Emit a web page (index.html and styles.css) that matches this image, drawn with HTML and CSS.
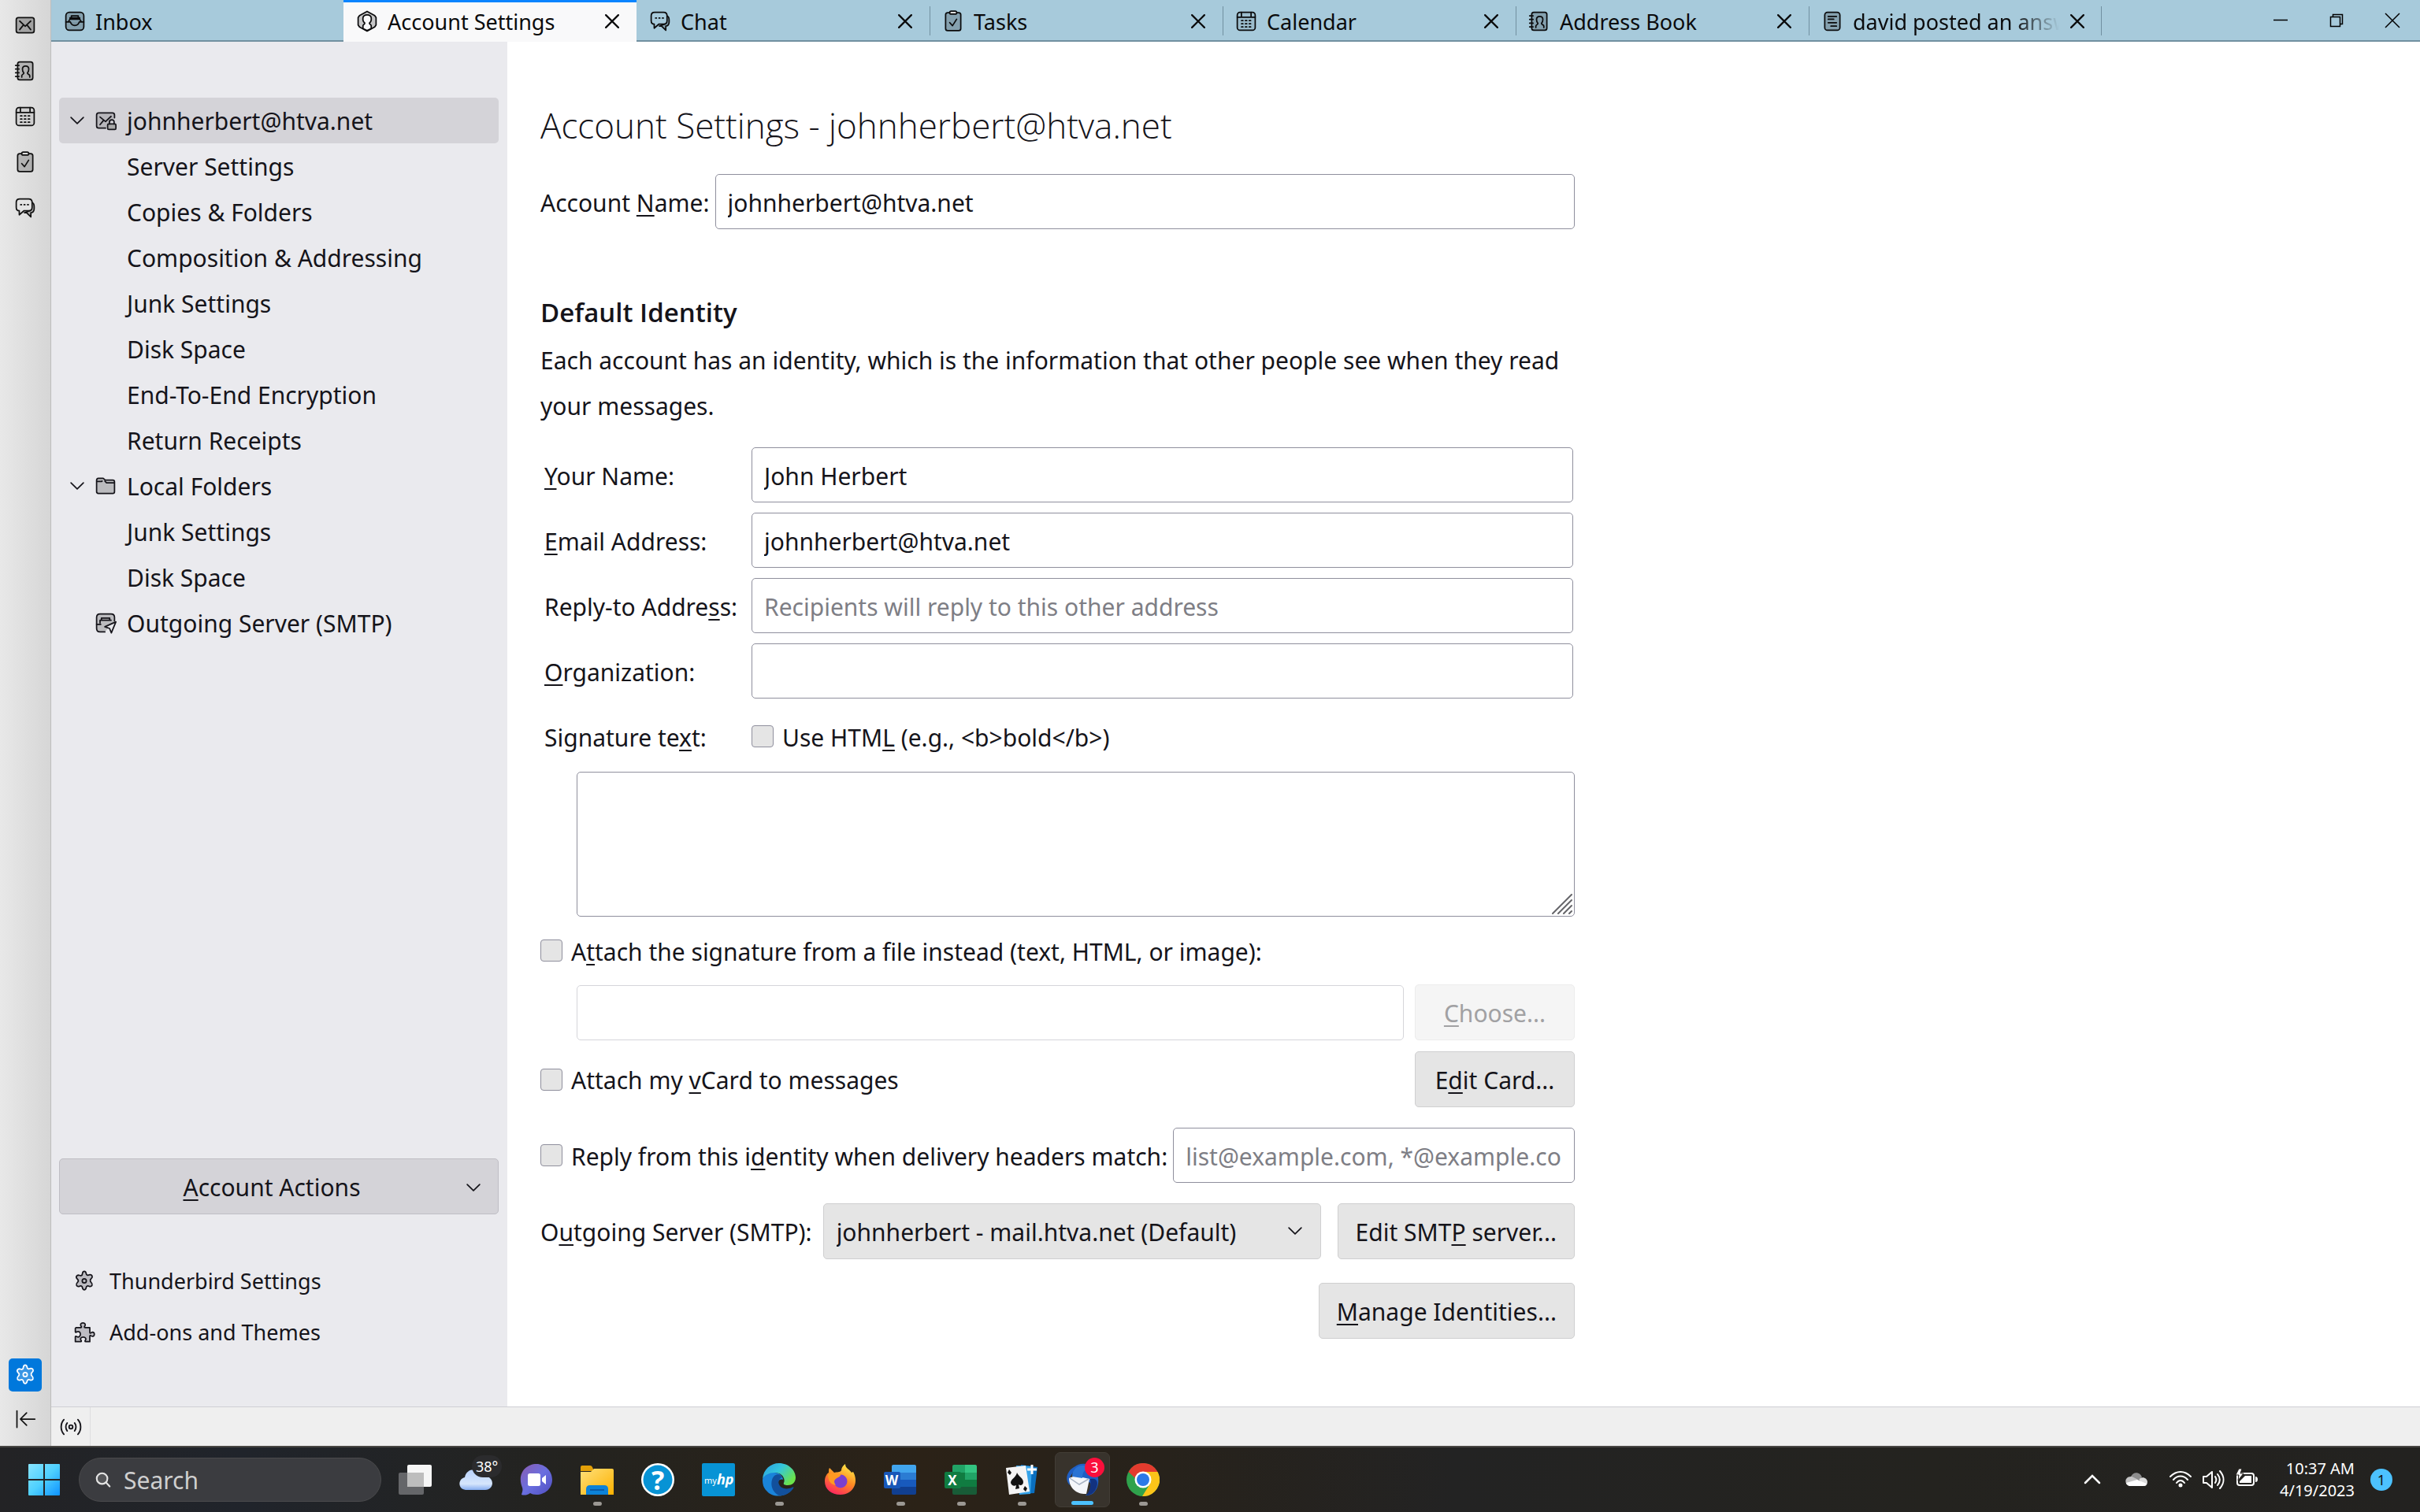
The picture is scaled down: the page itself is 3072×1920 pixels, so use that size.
FILE: index.html
```html
<!DOCTYPE html>
<html lang="en">
<head>
    <meta charset="UTF-8">
    <meta name="viewport" content="width=device-width, initial-scale=1.0">
    <title>Account Settings</title>
    <link rel="stylesheet" href="styles.css">
</head>
<body>
    <!-- Icon definitions -->
    <svg class="defs" width="0" height="0" aria-hidden="true">
        <symbol id="i-mail" viewBox="0 0 16 16">
            <rect x="1.5" y="2.5" width="13" height="11" rx="1.5" fill="#0004"/>
            <path d="M4 5l4 3.8L12 5M4 11.2l2.4-3M12 11.2l-2.4-3"/>
        </symbol>
        <symbol id="i-book" viewBox="0 0 16 16">
            <rect x="2.5" y="1.5" width="11" height="13" rx="1.5" fill="#0003"/>
            <path d="M1 4h2.5M1 6.7h2.5M1 9.4h2.5M1 12h2.5M5.5 12.5v-1c0-1 1.5-1 1.5-2C6 8.5 6 7.5 6 6.7 6 5.2 7 4.5 8.3 4.5s2.3.7 2.3 2.2c0 .8 0 1.800-1 2.800 0 1 1.700 1 1.700 2v1"/>
        </symbol>
        <symbol id="i-cal" viewBox="0 0 16 16">
            <rect x="1.5" y="1.5" width="13" height="13" rx="2" fill="#0001"/>
            <path d="M1.5 5h13M4.5 1.500v3M11.5 1.500v3"/>
            <path stroke-dasharray="1 1.800" d="M4.600 7.500h7M4.600 9.800h7M4.600 12.100h7"/>
        </symbol>
        <symbol id="i-task" viewBox="0 0 16 16">
            <rect x="2.5" y="1.800" width="11" height="13" rx="1.5" fill="#0003"/>
            <rect x="5.5" y=".6" width="5" height="2.200" rx="1" fill="#ddd"/>
            <path d="M5.5 9l2 2.200 3-4.700"/>
        </symbol>
        <symbol id="i-chat" viewBox="0 0 16 16">
            <path fill="#0003" d="M12.7 4c1.3.4 1.8 1.5 1.8 3v1.5c0 1.8-.9 2.8-2.4 3v3L9 11.500H7.500l4-1.500z"/>
            <path class="bubble" d="M4 1.5h6.5c1.5 0 2.5 1 2.5 2.5v3.500c0 1.500-1 2.500-2.500 2.500H7.200l-3.500 3v-3c-1.300 0-2.200-1-2.200-2.500V4c0-1.500 1-2.500 2.500-2.500z"/>
            <path stroke-dasharray=".6 1.900" d="M4.700 5.700h5.600"/>
        </symbol>
        <symbol id="i-gear" viewBox="0 0 16 16">
            <path d="M6.7 2.2C6.9 1.2 7.3.8 8 .8s1.1.4 1.3 1.4l.3 1 .9.5 1-.3c1-.3 1.7-.1 2.1.6s.2 1.3-.5 2l-.7.8v1.3l.7.9c.7.7.8 1.4.5 2-.4.7-1.1.9-2.1.6l-1-.3-.9.5-.3 1c-.2 1-.6 1.4-1.3 1.4s-1.1-.4-1.3-1.4l-.3-1-.9-.5-1 .3c-1 .3-1.7.1-2.1-.6-.3-.6-.2-1.3.5-2l.7-.9V7.200l-.7-.9c-.7-.7-.9-1.400-.5-2s1.100-.9 2.100-.6l1 .3.900-.5z"/>
            <circle cx="8" cy="7.700" r="1.500"/>
        </symbol>
        <symbol id="i-inbox" viewBox="0 0 16 16">
            <rect x="1.5" y="1.5" width="13" height="13" rx="2.5" fill="#0003"/>
            <path d="M3.5 8l1-1.500h7l1 1.500M4.500 6.500v-1h7v1M5.500 5.500V4h5v1.500"/>
            <path fill="#0001" d="M1.500 8.500h3.300c.4 1.700 1.500 2.500 3.200 2.500s2.800-.8 3.200-2.500h3.300"/>
        </symbol>
        <symbol id="i-account" viewBox="0 0 16 16">
            <path fill="#0003" d="M8 .8l5.500 3 1 1.500v5.400l-1 1.500-5.500 3-5.500-3-1-1.500V5.300l1-1.500z"/>
            <path fill="#f9f9fa" d="M5 13.300v-2c0-1 1.500-1 1.300-2C5 8.300 4.800 7 5 5.500 5.200 4 6.300 3.300 8 3.300s2.800.7 3 2.200c.2 1.500 0 2.800-1.300 3.800-.2 1 1.300 1 1.300 2v2l-3 1.500z"/>
        </symbol>
        <symbol id="i-page" viewBox="0 0 16 16">
            <rect x="2.5" y="1.5" width="11" height="13" rx="2" fill="#0003"/>
            <path d="M5 4.500h6M5 6.500h4M5 9h6M7 11.500h4"/>
        </symbol>
        <symbol id="i-mail-lock" viewBox="0 0 16 16">
            <path fill="#0002" d="M8 13.500H3c-1 0-1.500-.5-1.500-1.500V4c0-1 .5-1.500 1.500-1.500h10c1 0 1.500.5 1.500 1.500v2"/>
            <path d="M4 5.500l4 3.300L12 5M4 11l2.300-2.800"/>
            <rect x="9.500" y="10.500" width="6" height="4" rx=".8" fill="#aaa"/>
            <path d="M10.800 10.500V9c0-2 3.400-2 3.400 0v1.500"/>
        </symbol>
        <symbol id="i-folder" viewBox="0 0 16 16">
            <path fill="#0003" d="M1.500 4c0-1 .5-1.500 1.300-1.500h3.500l1.500 1.300h5.400c.9 0 1.300.5 1.300 1.300v7c0 .9-.5 1.400-1.300 1.400H2.800c-.9 0-1.300-.5-1.300-1.300z"/>
            <path d="M2 4.800h3l.5-.3M7.500 4.500l1.200 1.300h5.500"/>
        </symbol>
        <symbol id="i-out" viewBox="0 0 16 16">
            <path fill="#0003" d="M7.500 14.500H4c-1.500 0-2.500-1-2.500-2.500V4c0-1.500 1-2.500 2.500-2.500h8c1.500 0 2.500 1 2.500 2.500v2.500"/>
            <path d="M1.500 9h3M4 8V6h8M5 6V4.500h6V6"/>
            <path fill="#eaeaee" d="M7.500 10.800l8-3.600-3.300 8-1.300-3.200z"/>
        </symbol>
        <symbol id="i-puzzle" viewBox="0 0 16 16">
            <path d="M2 4.500h3.500c.6 0 .6-.6.200-1C4.800 2.300 5.500 1 7 1s2.200 1.300 1.300 2.500c-.4.400-.4 1 .2 1H12V8c0 .6.500.6 1 .2 1.200-.9 2.300-.2 2.300 1.100s-1.100 2-2.300 1.200c-.5-.4-1-.4-1 .2v4H9c-.6 0-.6-.6-.2-1 .9-1.200 0-2.300-1.600-2.300s-2.500 1.100-1.600 2.300c.4.400.4 1-.2 1H1.500v-3.500c0-.6.500-.6 1-.2 1.500.8 2.700-.2 2.700-1.700S4 6.800 2.500 7.600c-.5.400-1 .4-1-.2V5z"/>
        </symbol>
        <symbol id="i-down" viewBox="0 0 16 16">
            <path d="M1 4.500l7 7 7-7"/>
        </symbol>
        <symbol id="i-close" viewBox="0 0 16 16">
            <path d="M1 1l14 14M15 1L1 15"/>
        </symbol>
    </svg>

    <div class="app">
        <!-- Spaces toolbar -->
        <nav class="spaces" aria-label="Spaces">
            <button class="space" aria-label="Mail"><svg class="icon"><use href="#i-mail"/></svg></button>
            <button class="space" aria-label="Address Book"><svg class="icon"><use href="#i-book"/></svg></button>
            <button class="space" aria-label="Calendar"><svg class="icon"><use href="#i-cal"/></svg></button>
            <button class="space" aria-label="Tasks"><svg class="icon"><use href="#i-task"/></svg></button>
            <button class="space" aria-label="Chat"><svg class="icon"><use href="#i-chat"/></svg></button>
            <button class="space space-settings" aria-label="Settings"><svg class="icon icon-light"><use href="#i-gear"/></svg></button>
            <button class="space space-collapse" aria-label="Collapse">
                <svg class="icon" viewBox="0 0 16 16"><path d="M2 2v12M15 8H5M9 3.500L4.500 8 9 12.500"/></svg>
            </button>
        </nav>

        <div class="window">
            <header class="tabbar">
                <div class="tab tab-first">
                    <button class="tab-button"><svg class="icon"><use href="#i-inbox"/></svg><span class="tab-text">Inbox</span></button>
                </div>
                <div class="tab tab-active">
                    <button class="tab-button"><svg class="icon"><use href="#i-account"/></svg><span class="tab-text">Account Settings</span></button>
                    <button class="tab-close" aria-label="Close tab"><svg class="icon-x"><use href="#i-close"/></svg></button>
                </div>
                <div class="tab">
                    <button class="tab-button"><svg class="icon"><use href="#i-chat"/></svg><span class="tab-text">Chat</span></button>
                    <button class="tab-close" aria-label="Close tab"><svg class="icon-x"><use href="#i-close"/></svg></button>
                </div>
                <div class="tab tab-line">
                    <button class="tab-button"><svg class="icon"><use href="#i-task"/></svg><span class="tab-text">Tasks</span></button>
                    <button class="tab-close" aria-label="Close tab"><svg class="icon-x"><use href="#i-close"/></svg></button>
                </div>
                <div class="tab tab-line">
                    <button class="tab-button"><svg class="icon"><use href="#i-cal"/></svg><span class="tab-text">Calendar</span></button>
                    <button class="tab-close" aria-label="Close tab"><svg class="icon-x"><use href="#i-close"/></svg></button>
                </div>
                <div class="tab tab-line">
                    <button class="tab-button"><svg class="icon"><use href="#i-book"/></svg><span class="tab-text">Address Book</span></button>
                    <button class="tab-close" aria-label="Close tab"><svg class="icon-x"><use href="#i-close"/></svg></button>
                </div>
                <div class="tab tab-line tab-last">
                    <button class="tab-button"><svg class="icon"><use href="#i-page"/></svg><span class="tab-text tab-fade">david posted an answer</span></button>
                    <button class="tab-close" aria-label="Close tab"><svg class="icon-x"><use href="#i-close"/></svg></button>
                </div>
                <div class="window-buttons">
                    <button aria-label="Minimize"><svg class="icon-win" viewBox="0 0 20 20"><path d="M1 9.500h18"/></svg></button>
                    <button aria-label="Restore"><svg class="icon-win" viewBox="0 0 20 20"><path d="M2.500 5.500h12v12h-12zM5.500 5.500v-3h12v12h-3"/></svg></button>
                    <button aria-label="Close"><svg class="icon-win" viewBox="0 0 20 20"><path d="M1 1l18 18M19 1L1 19"/></svg></button>
                </div>
            </header>

            <div class="content">
                <aside class="sidebar">
                    <ul class="tree">
                        <li><a class="node selected" href="#"><svg class="twisty"><use href="#i-down"/></svg><svg class="icon"><use href="#i-mail-lock"/></svg>johnherbert@htva.net</a>
                            <ul>
                                <li><a class="leaf" href="#">Server Settings</a></li>
                                <li><a class="leaf" href="#">Copies &amp; Folders</a></li>
                                <li><a class="leaf" href="#">Composition &amp; Addressing</a></li>
                                <li><a class="leaf" href="#">Junk Settings</a></li>
                                <li><a class="leaf" href="#">Disk Space</a></li>
                                <li><a class="leaf" href="#">End-To-End Encryption</a></li>
                                <li><a class="leaf" href="#">Return Receipts</a></li>
                            </ul>
                        </li>
                        <li><a class="node" href="#"><svg class="twisty"><use href="#i-down"/></svg><svg class="icon"><use href="#i-folder"/></svg>Local Folders</a>
                            <ul>
                                <li><a class="leaf" href="#">Junk Settings</a></li>
                                <li><a class="leaf" href="#">Disk Space</a></li>
                            </ul>
                        </li>
                        <li><a class="node" href="#"><span class="twisty"></span><svg class="icon"><use href="#i-out"/></svg>Outgoing Server (SMTP)</a></li>
                    </ul>

                    <button class="actions"><span class="actions-text"><u>A</u>ccount Actions</span><svg class="chevron"><use href="#i-down"/></svg></button>

                    <div class="side-links">
                        <a href="#"><svg class="icon icon-filled"><use href="#i-gear"/></svg>Thunderbird Settings</a>
                        <a href="#"><svg class="icon icon-filled"><use href="#i-puzzle"/></svg>Add-ons and Themes</a>
                    </div>
                </aside>

                <main class="page">
                    <form class="form">
                        <h1>Account Settings - johnherbert@htva.net</h1>
                        <div class="row name-row">
                            <label for="account-name">Account <u>N</u>ame:</label>
                            <input class="field" type="text" id="account-name" value="johnherbert@htva.net">
                        </div>

                        <h2>Default Identity</h2>
                        <p class="description">Each account has an identity, which is the information that other people see when they read your messages.</p>

                        <div class="identity">
                            <label for="your-name"><u>Y</u>our Name:</label>
                            <input class="field" type="text" id="your-name" value="John Herbert">
                            <label for="email"><u>E</u>mail Address:</label>
                            <input class="field" type="text" id="email" value="johnherbert@htva.net">
                            <label for="reply-to">Reply-to Addre<u>s</u>s:</label>
                            <input class="field" type="text" id="reply-to" placeholder="Recipients will reply to this other address">
                            <label for="organization"><u>O</u>rganization:</label>
                            <input class="field" type="text" id="organization">
                            <label for="signature">Signature te<u>x</u>t:</label>
                            <div class="check">
                                <input type="checkbox" id="use-html">
                                <label for="use-html">Use HTM<u>L</u> (e.g., &lt;b&gt;bold&lt;/b&gt;)</label>
                            </div>
                        </div>

                        <div class="signature">
                            <textarea class="field" id="signature"></textarea>
                            <svg class="grip" viewBox="0 0 26 26"><path d="M1 25L25 1M8 25L25 8M15 25l10-10M22 25l3-3"/></svg>
                        </div>

                        <div class="check attach-file">
                            <input type="checkbox" id="attach-file">
                            <label for="attach-file">A<u>t</u>tach the signature from a file instead (text, HTML, or image):</label>
                        </div>
                        <div class="row file-row">
                            <input class="field" type="text" aria-label="Signature file" disabled>
                            <button class="button button-small" type="button" disabled><u>C</u>hoose...</button>
                        </div>

                        <div class="row vcard-row">
                            <div class="check">
                                <input type="checkbox" id="vcard">
                                <label for="vcard">Attach my <u>v</u>Card to messages</label>
                            </div>
                            <button class="button button-small" type="button">E<u>d</u>it Card...</button>
                        </div>

                        <div class="row match-row">
                            <div class="check">
                                <input type="checkbox" id="match">
                                <label for="match">Reply from this i<u>d</u>entity when delivery headers match:</label>
                            </div>
                            <input class="field" type="text" aria-label="Delivery headers" placeholder="list@example.com, *@example.com">
                        </div>

                        <div class="row smtp-row">
                            <label for="smtp">O<u>u</u>tgoing Server (SMTP):</label>
                            <div class="select">
                                <select class="button" id="smtp">
                                    <option>johnherbert - mail.htva.net (Default)</option>
                                </select>
                                <svg class="chevron"><use href="#i-down"/></svg>
                            </div>
                            <button class="button" type="button">Edit SMT<u>P</u> server...</button>
                        </div>

                        <div class="row manage-row">
                            <button class="button" type="button"><u>M</u>anage Identities...</button>
                        </div>
                    </form>
                </main>
            </div>

            <footer class="statusbar">
                <button class="online" aria-label="Online">
                    <svg class="icon-online" viewBox="0 0 30 24"><circle cx="15" cy="12" r="2.500"/><path d="M10 6.500c-2.500 3-2.500 8 0 11M20 6.500c2.500 3 2.500 8 0 11M5.500 2c-5 5.500-5 14.500 0 20M24.500 2c5 5.500 5 14.500 0 20"/></svg>
                </button>
            </footer>
        </div>
    </div>

    <!-- Windows taskbar -->
    <div class="taskbar">
        <button class="start" aria-label="Start">
            <svg width="42" height="42" viewBox="0 0 42 42">
                <defs><linearGradient id="g-win" gradientUnits="userSpaceOnUse" x1="0" y1="0" x2="42" y2="42"><stop offset="0" stop-color="#8be6ff"/><stop offset=".5" stop-color="#4fd0ff"/><stop offset="1" stop-color="#0a8fff"/></linearGradient></defs>
                <path fill="url(#g-win)" d="M2 1h18v19H1V2q0-1 1-1zM22 1h18q1 0 1 1v18H22zM1 22h19v19H2q-1 0-1-1zM22 22h19v18q0 1-1 1H22z"/>
            </svg>
        </button>
        <label class="search">
            <svg width="28" height="28" viewBox="0 0 28 28" fill="#ffffff22" stroke="#e4e4e4" stroke-width="3" stroke-linecap="round"><circle cx="12" cy="12" r="9.500"/><path d="M19 19l6.500 7"/></svg>
            <input type="text" placeholder="Search" aria-label="Search">
        </label>

        <div class="apps">
            <button class="app-button" aria-label="Task view">
                <svg viewBox="0 0 42 42"><rect x="11" y="2" width="31" height="28" rx="2" fill="#f6f6f6"/><rect x="0" y="12" width="32" height="28" rx="2" fill="#77777acc"/><path d="M11 12h21v18H11z" fill="#bdbdbd"/></svg>
            </button>
            <button class="app-button" aria-label="Weather">
                <svg viewBox="0 0 42 42"><defs><linearGradient id="g-cloud" x1="0" y1="0" x2="0" y2="1"><stop offset="0" stop-color="#b9d2fb"/><stop offset=".7" stop-color="#d6e6fc"/><stop offset="1" stop-color="#86adf0"/></linearGradient></defs><path fill="url(#g-cloud)" d="M8 34C-2 33-2 20 7 18 9 6 25 5 29 16c16-1 17 17 4 18z"/></svg>
                <span class="temp">38°</span>
            </button>
            <button class="app-button" aria-label="Chat">
                <svg viewBox="0 0 42 42"><defs><linearGradient id="g-chat" x1="0" y1="0" x2="1" y2="1"><stop offset="0" stop-color="#8a5bb0"/><stop offset=".5" stop-color="#6a6fe0"/><stop offset="1" stop-color="#4f4dbf"/></linearGradient></defs><path fill="url(#g-chat)" d="M21 1C32 1 41 10 41 21S32 40 21 40c-4 0-6-1-8-2-4 3-8 3-11 2 1-4 2-6 1-9C-4 14 7 1 21 1z"/><rect x="10" y="13" width="16" height="16" rx="2.500" fill="#fff"/><path fill="#fff" d="M28 19l5-4v12l-5-4z"/></svg>
            </button>
            <button class="app-button running" aria-label="File Explorer">
                <svg viewBox="0 0 42 42"><defs><linearGradient id="g-folder" x1="0" y1="0" x2="1" y2="1"><stop offset="0" stop-color="#ffe07a"/><stop offset="1" stop-color="#fcb100"/></linearGradient></defs><path fill="#e3a008" d="M0 5q0-2 2-2h10q2 0 3 2l2 5H0z"/><path fill="url(#g-folder)" d="M0 11h13l4-4h23q2 0 2 2v31H0z"/><path fill="#0c82d8" d="M7 40v-7q0-5 5-5h18q5 0 5 5v7z"/><path d="M12 34h18" stroke="#0a5ba8" stroke-width="2"/></svg>
            </button>
            <button class="app-button" aria-label="Get Help">
                <svg viewBox="0 0 42 42"><circle cx="21" cy="21" r="21" fill="#fff"/><circle cx="21" cy="21" r="18.500" fill="#0793d5"/></svg>
                <span class="mark">?</span>
            </button>
            <button class="app-button" aria-label="myHP">
                <svg viewBox="0 0 42 42"><rect width="42" height="42" rx="2" fill="#0793d5"/><text x="3" y="26" class="glyph-my">my</text><text x="19" y="27" class="glyph-hp">hp</text></svg>
            </button>
            <button class="app-button running" aria-label="Edge">
                <svg viewBox="0 0 42 42"><defs><linearGradient id="g-edge" x1="0" y1="0" x2="1" y2=".6"><stop offset="0" stop-color="#2b9ce0"/><stop offset=".5" stop-color="#34c6dc"/><stop offset="1" stop-color="#6be34b"/></linearGradient></defs><path fill="#1a84da" d="M0 21C1 14 8 11 15 12c7 0 11 5 11 9-5-2-8 4-7 8 2 7 10 8 18 4-6 10-24 12-32 2-4-4-5-9-5-14z"/><path fill="#12509c" d="M15 16c-6 6-5 20 6 25 7 1 14-3 18-9 1-2 0-2-2-1-7 3-14 1-16-4-2-4 1-8 4-9-2-4-6-5-10-2z"/><path fill="url(#g-edge)" d="M0 20C1 8 10 0 21 0c12 0 21 9 21 18 0 7-5 10-10 10-4 0-6-1-5-3 2-3 0-13-12-13C9 12 2 15 0 20z"/></svg>
            </button>
            <button class="app-button" aria-label="Firefox">
                <svg viewBox="0 0 42 42"><defs><linearGradient id="g-ff" x1=".8" y1="0" x2=".3" y2="1"><stop offset="0" stop-color="#fff04a"/><stop offset=".5" stop-color="#ff8b22"/><stop offset="1" stop-color="#ff2560"/></linearGradient></defs><path fill="url(#g-ff)" d="M8 6l6 6c3-1 8 0 9-3 0-3 2-6 5-8 0 6 6 7 8 11l2-1c3 5 4 12 2 17-3 8-10 12-18 12C10 40 2 33 2 23c0-5 2-9 5-11 0-3 0-4 1-6z"/><circle cx="22" cy="23" r="8.500" fill="#7b3fd0"/><path fill="#ff9a22" d="M6 14c5-2 10 0 16 0 1 3-4 4-6 6-3 2-2 5 0 8-8-1-10-8-10-14z"/></svg>
            </button>
            <button class="app-button running" aria-label="Word">
                <svg viewBox="0 0 42 42"><path fill="#41a5ee" d="M12 2h27q2 0 2 2v8H10V4q0-2 2-2z"/><path fill="#2b7cd3" d="M10 12h31v9H10z"/><path fill="#185abd" d="M10 21h31v9H10z"/><path fill="#103f91" d="M10 30h31v8q0 2-2 2H12q-2 0-2-2z"/><rect x="0" y="11" width="21" height="21" rx="2" fill="#1857b8"/><text x="10" y="28" class="glyph-office">W</text></svg>
            </button>
            <button class="app-button running" aria-label="Excel">
                <svg viewBox="0 0 42 42"><path fill="#21a366" d="M12 2h14v10H10V4q0-2 2-2z"/><path fill="#33c481" d="M26 2h13q2 0 2 2v8H26z"/><path fill="#107c41" d="M10 12h16v18H10zM26 21h15v9H26z"/><path fill="#21a366" d="M26 12h15v9H26z"/><path fill="#185c37" d="M10 30h31v8q0 2-2 2H12q-2 0-2-2z"/><rect x="0" y="11" width="21" height="21" rx="2" fill="#107c41"/><text x="10" y="28" class="glyph-office">X</text></svg>
            </button>
            <button class="app-button running" aria-label="Solitaire">
                <svg viewBox="0 0 42 42"><path fill="#0a6fbf" d="M20 2l21 3-4 33-16 1z"/><path fill="#35a3ea" d="M14 3l20 1-2 35-14 1z"/><path fill="#f4f4f4" d="M1 6l25-3 5 33-26 4z"/><path fill="#111" d="M15 12c2 5 8 7 8 12 0 4-4 5-6 3l1 5-5 1 1-5c-3 2-6 0-7-3 0-5 7-7 8-13z"/><path fill="#111" d="M5 8l3 4-2 3-3-3zM25 29l3 3-2 4-3-3z"/><path d="M34 2v12M28 8h12" stroke="#fff" stroke-width="3"/></svg>
            </button>
            <button class="app-button running current" aria-label="Thunderbird">
                <svg viewBox="0 0 42 42"><path fill="#1f5fc4" d="M12 4C17-1 30-1 37 8c6 9 6 22-2 30-4 3-8 3-10 3 6-4 8-10 6-16L9 12c-4 4-5 10-4 16C-3 20 3 8 12 4z"/><path fill="#12327f" d="M31 20c9-2 11 5 7 13-2 5-8 8-12 8 5-6 6-13 5-21z"/><path fill="#f4f6fa" d="M4 19l8-3 18 4-4 19C17 40 4 34 4 19z"/><path d="M5 19l12 8 12-7" fill="none" stroke="#a9b4c4" stroke-width="1.500"/><path fill="#2a73d4" d="M8 17c0-8 6-14 13-14 5 0 8 2 9 4-7 1-9 5-9 12z"/></svg>
                <span class="badge">3</span>
            </button>
            <button class="app-button running" aria-label="Chrome">
                <svg viewBox="0 0 42 42"><circle cx="21" cy="21" r="21" fill="#2fa24c"/><path fill="#fcc419" d="M21 11h18.500A21 21 0 0 1 20 42l10-16z"/><path fill="#e33b2e" d="M2.500 11A21 21 0 0 1 39.500 11H21c-5 0-9 4-9.500 8.500z"/><circle cx="21" cy="21" r="10.500" fill="#fff"/><circle cx="21" cy="21" r="8" fill="#2b79e8"/></svg>
            </button>
        </div>

        <div class="tray">
            <svg width="28" height="28" viewBox="0 0 28 28"><path d="M5 18l9-9 9 9" fill="none" stroke="#fff" stroke-width="2.500" stroke-linecap="round"/></svg>
            <svg class="cloud" width="28" height="28" viewBox="0 0 28 28"><path fill="#8d8d8d" d="M7 10c3-7 12-6 14 1l-8 6z"/><path fill="#c4c4c4" d="M5 22C-2 20-1 10 7 10c3 0 5 2 14 7l-8 5z"/><path fill="#dcdcdc" d="M17 14c3-5 11-3 11 3 0 3-2 5-4 5z"/><path fill="#fff" d="M5 22c-3-1-4-3-4-4l14-4 12 5c-1 2-2 3-4 3H7z"/></svg>
            <svg width="28" height="28" viewBox="0 0 28 28" fill="none" stroke="#fff" stroke-width="2" stroke-linecap="round"><path d="M1 10c8-8 18-8 26 0M5 14c5-6 13-6 18 0M9 18c3-4 7-4 10 0"/><circle cx="14" cy="21" r="1.500" fill="#fff"/></svg>
            <svg width="28" height="28" viewBox="0 0 28 28" fill="none" stroke="#fff" stroke-width="2" stroke-linecap="round" stroke-linejoin="round"><path d="M1 10h4l7-6v20l-7-6H1zM16 10c2 3 2 5 0 8M19 7c4 5 4 9 0 14M22 3c6 7 6 15 0 22"/></svg>
            <svg width="28" height="28" viewBox="0 0 28 28"><rect x="2" y="6" width="21" height="15" rx="3" fill="none" stroke="#fff" stroke-width="2"/><path fill="#fff" d="M12 9h8v9H5v-2zM25 10q3 0 3 3.500t-3 3.500z"/><path fill="#fff" stroke="#26221e" d="M4 0L0 8h4l-1 7 7-9H6l2-6z"/></svg>
            <div class="clock"><span>10:37 AM</span><span>4/19/2023</span></div>
            <span class="notice">1</span>
        </div>
    </div>
</body>
</html>
```

FILE: styles.css
```css
* {
    box-sizing: border-box;
}

body {
    margin: 0;
    height: 100vh;
    display: flex;
    flex-direction: column;
    font-family: "Noto Sans", "Open Sans", sans-serif;
    font-size: 30px;
    color: #15141a;
    background-color: #fff;
}

button,
input,
select,
textarea {
    font: inherit;
    color: inherit;
}

button {
    border: none;
    background: none;
    padding: 0;
}

a {
    color: inherit;
    text-decoration: none;
}

ul {
    list-style: none;
    margin: 0;
    padding: 0;
}

u {
    text-decoration-thickness: 2px;
    text-underline-offset: 4px;
}

.defs {
    position: absolute;
}

.icon,
.icon-x,
.icon-win,
.icon-online,
.twisty,
.chevron,
.grip {
    flex: none;
    fill: none;
    stroke: currentColor;
    stroke-linecap: round;
    stroke-linejoin: round;
}

.icon {
    width: 28px;
    height: 28px;
}

.icon-filled {
    fill: #bdbcc2;
}

.icon-light {
    fill: #3a96e4;
    stroke: #fff;
}

.bubble {
    fill: #e4e4e4;
}

.tabbar .icon {
    --bubble: #a7cadb;
}

.icon .bubble,
.bubble {
    fill: var(--bubble, #e4e4e4);
}

.icon-x {
    width: 18px;
    height: 18px;
    stroke-width: 2;
}

.icon-win {
    width: 20px;
    height: 20px;
    stroke: #000;
    stroke-width: 1.5;
    stroke-linecap: butt;
    stroke-linejoin: miter;
}

.twisty,
.chevron {
    width: 18px;
    height: 18px;
    stroke-width: 1.5;
}

.app {
    flex: 1;
    display: flex;
    min-height: 0;
}

/* Spaces toolbar */
.spaces {
    width: 65px;
    display: flex;
    flex-direction: column;
    align-items: center;
    padding-top: 3px;
    background: linear-gradient(90deg, #e8e8e8, #d6d6d6);
    border-right: 1px solid #bdbdbd;
    color: #111;
}

.space {
    width: 42px;
    height: 58px;
    display: flex;
    align-items: center;
    justify-content: center;
}

.space-settings {
    height: 42px;
    margin-top: auto;
    border-radius: 5px;
    background-color: #0078dc;
}

.space-collapse {
    height: 69px;
}

.window {
    flex: 1;
    display: flex;
    flex-direction: column;
    min-width: 0;
}

/* Tabs */
.tabbar {
    display: flex;
    height: 53px;
    background-color: #a7cadb;
    border-bottom: 2px solid #7190a0;
    color: #0b0b0c;
    font-size: 27px;
}

.tab {
    width: 372px;
    position: relative;
    display: flex;
    align-items: center;
    padding: 3px 22px 0 16px;
}

.tab-first {
    width: 371px;
}

.tab-active {
    height: 53px;
    background-color: #f9f9fa;
    border-top: 3px solid #0a84ff;
    padding-top: 0;
    padding-bottom: 2px;
}

.tab-line::before,
.tab-last::after {
    content: "";
    position: absolute;
    left: 0;
    top: 8px;
    bottom: 6px;
    width: 1px;
    background-color: #7190a0;
}

.tab-last::after {
    left: auto;
    right: 0;
}

.tab-button {
    flex: 1;
    min-width: 0;
    display: flex;
    align-items: center;
    gap: 12px;
    text-align: left;
}

.tab-text {
    flex: 1;
    overflow: hidden;
    white-space: nowrap;
}

.tab-fade {
    margin-right: 14px;
    mask-image: linear-gradient(90deg, #000 78%, transparent);
}

.tab-close {
    display: flex;
}

.window-buttons {
    margin-left: auto;
    display: flex;
}

.window-buttons button {
    width: 71px;
    display: flex;
    align-items: center;
    justify-content: center;
}

.content {
    flex: 1;
    display: flex;
    min-height: 0;
}

/* Sidebar */
.sidebar {
    width: 579px;
    display: flex;
    flex-direction: column;
    padding: 71px 11px 62px 10px;
    background-color: #eaeaee;
}

.node,
.leaf {
    display: flex;
    align-items: center;
    height: 58px;
}

.node {
    gap: 13px;
    padding-left: 14px;
}

.leaf {
    padding-left: 86px;
}

.selected {
    border-radius: 5px;
    background-color: #d4d3d8;
}

.actions {
    display: flex;
    align-items: center;
    height: 71px;
    margin-top: auto;
    padding: 2px 22px 0;
    border: 1px solid #bfbec4;
    border-radius: 5px;
    background-color: #d4d3d8;
}

.actions-text {
    flex: 1;
}

.side-links {
    margin-top: 52px;
    font-size: 27px;
}

.side-links a {
    display: flex;
    align-items: center;
    gap: 18px;
    height: 65px;
    padding-left: 18px;
}

/* Settings form */
.page {
    flex: 1;
    padding: 76px 42px 0;
}

.form {
    max-width: 1313px;
}

h1 {
    margin: 0 0 32px;
    font-family: "Open Sans", sans-serif;
    font-size: 44px;
    font-weight: 300;
    line-height: 60px;
}

h2 {
    margin: 82px 0 8px;
    font-family: "Open Sans", sans-serif;
    font-size: 33px;
    font-weight: 600;
    line-height: 48px;
}

.description {
    margin: 0;
    line-height: 58px;
}

.row {
    display: flex;
    align-items: center;
}

.row label,
.identity label,
.check label {
    padding-top: 2px;
}

.field {
    flex: 1;
    min-width: 0;
    width: 100%;
    height: 70px;
    padding: 2px 15px 0;
    border: 1px solid #8f8f9d;
    border-radius: 5px;
    background-color: #fff;
}

.field::placeholder {
    color: #7e7e85;
    opacity: 1;
}

.field:disabled {
    border-color: #d5d5da;
}

.button {
    height: 71px;
    padding: 2px 22px 0;
    border: 1px solid #cfcfd0;
    border-radius: 5px;
    background-color: #e5e5e5;
    white-space: nowrap;
}

.button:disabled {
    border-color: #ececec;
    background-color: #f5f5f5;
    color: #a1a1a3;
}

.button-small {
    width: 203px;
    padding: 2px 0 0;
}

.name-row {
    gap: 7px;
}

.identity {
    display: grid;
    grid-template-columns: 263px 1fr;
    grid-auto-rows: 70px;
    row-gap: 13px;
    align-items: center;
    margin-top: 23px;
    padding: 0 2px 0 5px;
}

.check {
    display: flex;
    align-items: center;
    gap: 11px;
}

.check input {
    appearance: none;
    flex: none;
    width: 28px;
    height: 28px;
    margin: 0;
    border: 1px solid #8f8f9d;
    border-radius: 4px;
    background-color: #e5e5e5;
}

.signature {
    position: relative;
    margin: 10px 0 0 46px;
}

.signature .field {
    display: block;
    height: 184px;
    resize: none;
}

.grip {
    position: absolute;
    right: 3px;
    bottom: 3px;
    width: 26px;
    height: 26px;
    stroke: #66666a;
    stroke-width: 2;
}

.attach-file {
    height: 86px;
}

.file-row {
    gap: 14px;
    padding-left: 46px;
}

.vcard-row {
    justify-content: space-between;
    margin-top: 14px;
}

.match-row {
    gap: 7px;
    margin-top: 26px;
}

.smtp-row {
    gap: 14px;
    margin-top: 26px;
}

.select {
    flex: 1;
    position: relative;
    margin-right: 7px;
}

.select .button {
    appearance: none;
    display: block;
    width: 100%;
    padding: 2px 16px 0;
}

.select .chevron {
    position: absolute;
    right: 24px;
    top: 26px;
    pointer-events: none;
}

.manage-row {
    justify-content: flex-end;
    margin-top: 30px;
}

/* Status bar */
.statusbar {
    display: flex;
    height: 50px;
    background-color: #efefef;
    border-top: 1px solid #cfcfd4;
}

.online {
    width: 50px;
    display: flex;
    align-items: center;
    justify-content: center;
    border-right: 1px solid #dedee0;
}

.icon-online {
    width: 28px;
    height: 24px;
    stroke-width: 2;
}

/* Taskbar */
.taskbar {
    height: 84px;
    display: flex;
    align-items: center;
    padding: 0 35px;
    border-top: 2px solid #474542;
    background: linear-gradient(90deg, #232325, #20242b 10%, #24231f 24%, #2b2217 38%, #27221b 48%, #232323 60%, #24231f 80%, #232220);
    color: #fff;
}

.start {
    display: flex;
    margin-right: 23px;
}

.search {
    display: flex;
    align-items: center;
    gap: 16px;
    width: 384px;
    height: 56px;
    padding: 0 20px;
    border: 1px solid #4a4a4c;
    border-radius: 28px;
    background-color: #3b3c40;
}

.search input {
    min-width: 0;
    border: none;
    padding: 0;
    background: none;
}

.search input::placeholder {
    color: #cfcfcf;
    opacity: 1;
}

.apps {
    display: flex;
    gap: 7px;
    margin-left: 8px;
}

.app-button {
    position: relative;
    width: 70px;
    height: 70px;
    display: flex;
    align-items: center;
    justify-content: center;
    border-radius: 7px;
}

.app-button > svg {
    width: 42px;
    height: 42px;
}

.running::after {
    content: "";
    position: absolute;
    bottom: 2px;
    width: 11px;
    height: 5px;
    border-radius: 3px;
    background-color: #9b9893;
}

.current {
    background-color: #38332c;
    border: 1px solid #423d36;
}

.current::after {
    width: 28px;
    background-color: #4cc2ff;
}

.temp {
    position: absolute;
    left: 30px;
    top: 4px;
    padding: 0 5px;
    border-radius: 14px;
    background-color: #2b2b2d;
    font-size: 18px;
    line-height: 28px;
}

.mark {
    position: absolute;
    font-size: 34px;
    font-weight: 700;
    line-height: 42px;
}

.badge {
    position: absolute;
    right: 6px;
    top: 6px;
    width: 25px;
    height: 25px;
    border-radius: 50%;
    background-color: #fb0f3c;
    font-size: 18px;
    line-height: 25px;
}

.glyph-my {
    fill: #fff;
    font-size: 11px;
}

.glyph-hp {
    fill: #fff;
    font-size: 18px;
    font-style: italic;
    font-weight: 700;
}

.glyph-office {
    fill: #fff;
    font-size: 17px;
    font-weight: 700;
    text-anchor: middle;
}

.tray {
    display: flex;
    align-items: center;
    gap: 14px;
    margin-left: auto;
}

.tray .cloud {
    margin: 0 14px;
}

.clock {
    display: flex;
    flex-direction: column;
    align-items: flex-end;
    margin-left: 14px;
    font-size: 20px;
    line-height: 28px;
}

.notice {
    width: 28px;
    height: 28px;
    margin-left: 6px;
    border-radius: 50%;
    background-color: #4cc2ff;
    color: #111;
    font-size: 18px;
    line-height: 28px;
    text-align: center;
}
```
